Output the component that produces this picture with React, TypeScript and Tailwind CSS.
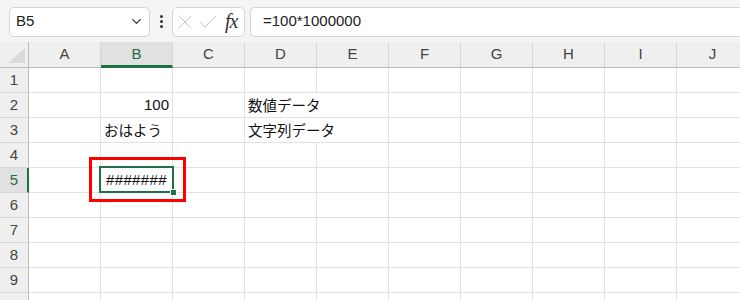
import { ChevronDown, X, Check } from "lucide-react"

const cols = ["A", "B", "C", "D", "E", "F", "G", "H", "I", "J"]
const rows = [1, 2, 3, 4, 5, 6, 7, 8, 9, 10]

const cellFont = { fontFamily: '"Noto Sans CJK JP", "Liberation Sans", sans-serif' }
const uiFont = { fontFamily: '"Liberation Sans", "Noto Sans CJK JP", sans-serif' }

function Cell({ row, col }: { row: number; col: number }) {
  const base = "h-[25px] border-r border-b border-[#e1e1e1] bg-white flex items-center text-[14.5px] text-[#111] overflow-visible whitespace-nowrap"

  // B2: number, right aligned
  if (row === 2 && col === 1) {
    return <div className={`${base} justify-end pr-[3px]`} style={uiFont}><span className="text-[15px]">100</span></div>
  }
  if (row === 3 && col === 1) {
    return <div className={`${base} pl-[3px] pb-[1px]`} style={cellFont}>おはよう</div>
  }
  if (row === 5 && col === 1) {
    return (
      <div className={`${base} justify-center`} style={uiFont}>
        <span className="text-[15px] tracking-[0.4px]">#######</span>
      </div>
    )
  }
  // D2 / D3: text spills over into E
  if ((row === 2 || row === 3) && col === 3) {
    return (
      <div className={`${base} col-span-2 pl-[3px] pb-[1px]`} style={cellFont}>
        {row === 2 ? "数値データ" : "文字列データ"}
      </div>
    )
  }
  if ((row === 2 || row === 3) && col === 4) return null
  return <div className={base} />
}

export default function App() {
  return (
    <div className="w-[740px] h-[300px] overflow-hidden bg-white relative" style={uiFont}>
      {/* Formula bar */}
      <div className="h-[42px] bg-[#f5f5f5] flex items-center pt-[1px]">
        <div className="ml-[9px] w-[141px] h-[30px] bg-white border border-[#d4d4d4] rounded-[5px] flex items-center justify-between pl-[6px] pr-[5px]">
          <span className="text-[15px] text-[#222]">B5</span>
          <ChevronDown size={15} strokeWidth={2} className="text-[#333]" />
        </div>
        <div className="w-[22px] flex flex-col items-center gap-[2px]">
          <div className="w-[3px] h-[3px] bg-[#333] rounded-full" />
          <div className="w-[3px] h-[3px] bg-[#333] rounded-full" />
          <div className="w-[3px] h-[3px] bg-[#333] rounded-full" />
        </div>
        <div className="w-[73px] h-[30px] bg-white border border-[#d4d4d4] rounded-[5px] flex items-center">
          <X size={24} strokeWidth={0.9} className="text-[#bdbdbd]" />
          <Check size={24} strokeWidth={0.9} className="text-[#bdbdbd] -ml-[1px]" />
          <span className="text-[20px] italic text-[#333] ml-[5px] tracking-[-1px] pb-[2px]" style={{ fontFamily: '"Liberation Serif", serif' }}>fx</span>
        </div>
        <div className="ml-[5px] flex-1 h-[30px] bg-white border border-[#d4d4d4] border-r-0 rounded-l-[5px] flex items-center pl-[12px]">
          <span className="text-[15px] text-[#222]">=100*1000000</span>
        </div>
      </div>

      {/* Sheet */}
      <div className="grid grid-cols-[29px_repeat(10,72px)]">
        {/* corner */}
        <div className="h-[26px] bg-[#efefef] border-r border-b border-[#bcbcbc] flex items-end justify-end pr-[3px] pb-[4px]">
          <div className="w-0 h-0 border-l-[17px] border-l-transparent border-b-[15px] border-b-[#dadada]" />
        </div>
        {cols.map((c, i) => (
          <div
            key={c}
            className={
              i === 1
                ? "h-[26px] bg-[#e1e1e1] border-r border-r-[#d6d6d6] border-b-[3px] border-b-[#1e7145] flex items-center justify-center text-[15px] text-[#1e6b45] pt-[2px]"
                : "h-[26px] bg-[#efefef] border-r border-r-[#d6d6d6] border-b border-b-[#bcbcbc] flex items-center justify-center text-[15px] text-[#444]"
            }
          >
            {c}
          </div>
        ))}

        {rows.map((r) => (
          <>
            <div
              key={`h${r}`}
              className={
                r === 5
                  ? "h-[25px] bg-[#e1e1e1] border-r-[2px] border-r-[#1e7145] border-b border-b-[#d6d6d6] flex items-center justify-center text-[15px] text-[#1e6b45] pl-[1px]"
                  : "h-[25px] bg-[#efefef] border-r border-r-[#bcbcbc] border-b border-b-[#d6d6d6] flex items-center justify-center text-[15px] text-[#444]"
              }
            >
              {r}
            </div>
            {cols.map((c, i) => (
              <Cell key={`${c}${r}`} row={r} col={i} />
            ))}
          </>
        ))}
      </div>

      {/* active cell B5 */}
      <div className="absolute left-[99px] top-[166px] w-[75px] h-[27px] border-2 border-[#1e7145] pointer-events-none" />
      <div className="absolute left-[170px] top-[189px] w-[7px] h-[7px] bg-[#1e7145] border border-white" />

      {/* red annotation */}
      <div className="absolute left-[89px] top-[157px] w-[97px] h-[45px] border-[3px] border-[#ff0000]" />
    </div>
  )
}
